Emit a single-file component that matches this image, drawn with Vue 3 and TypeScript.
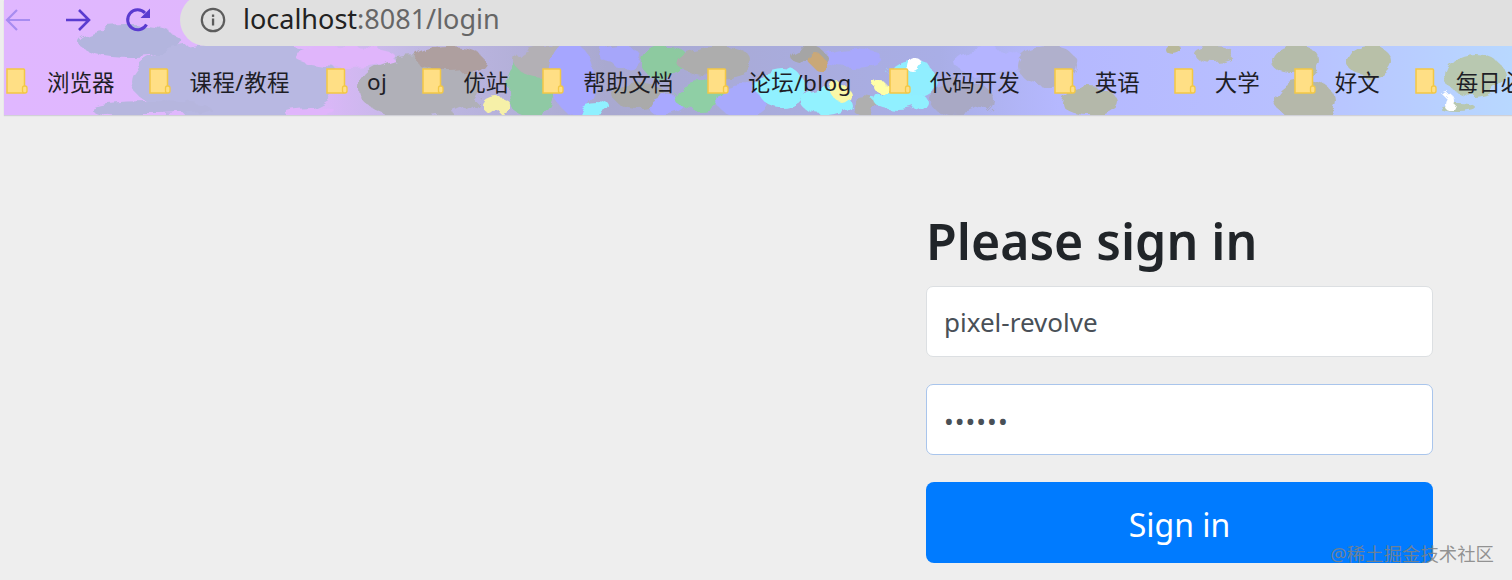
<script setup lang="ts">
interface Blob { x: number; y: number; rx: number; ry: number; c: string }
const blobs: Blob[] = [
  { x: 130, y: 42, rx: 52, ry: 14, c: '#b3b5de' },
  { x: 235, y: 80, rx: 105, ry: 40, c: '#b8b8e2' },
  { x: 150, y: 108, rx: 60, ry: 7, c: '#b6b6de' },
  { x: 345, y: 56, rx: 50, ry: 10, c: '#e0b5fb' },
  { x: 310, y: 112, rx: 26, ry: 5, c: '#e0b5fb' },
  { x: 420, y: 88, rx: 62, ry: 32, c: '#b0b0b8' },
  { x: 450, y: 60, rx: 34, ry: 12, c: '#ae9f9f' },
  { x: 495, y: 104, rx: 14, ry: 9, c: '#f6f0a8' },
  { x: 530, y: 88, rx: 24, ry: 30, c: '#8fc9a4' },
  { x: 545, y: 62, rx: 30, ry: 16, c: '#b3b0b5' },
  { x: 572, y: 78, rx: 22, ry: 34, c: '#a6a6ff' },
  { x: 620, y: 56, rx: 20, ry: 10, c: '#a6a6fa' },
  { x: 665, y: 62, rx: 24, ry: 18, c: '#8dcaa0' },
  { x: 715, y: 62, rx: 38, ry: 15, c: '#adadad' },
  { x: 640, y: 96, rx: 26, ry: 14, c: '#aaaaaa' },
  { x: 596, y: 110, rx: 17, ry: 8, c: '#8ff0ff' },
  { x: 668, y: 106, rx: 20, ry: 11, c: '#a8a8ff' },
  { x: 700, y: 96, rx: 26, ry: 16, c: '#8fcfa5' },
  { x: 742, y: 100, rx: 26, ry: 16, c: '#a8aafc' },
  { x: 782, y: 88, rx: 24, ry: 20, c: '#90f0ff' },
  { x: 825, y: 102, rx: 24, ry: 13, c: '#92f2ff' },
  { x: 840, y: 92, rx: 8, ry: 9, c: '#f8f8a8' },
  { x: 865, y: 106, rx: 14, ry: 9, c: '#afafaf' },
  { x: 852, y: 58, rx: 30, ry: 10, c: '#a8a8fc' },
  { x: 808, y: 56, rx: 18, ry: 8, c: '#a5a5a5' },
  { x: 818, y: 62, rx: 7, ry: 7, c: '#c9a878' },
  { x: 900, y: 100, rx: 26, ry: 12, c: '#90f0ff' },
  { x: 912, y: 78, rx: 24, ry: 18, c: '#90eeff' },
  { x: 915, y: 66, rx: 8, ry: 8, c: '#ffffff' },
  { x: 880, y: 86, rx: 7, ry: 6, c: '#ffffa8' },
  { x: 960, y: 98, rx: 32, ry: 18, c: '#a9a9c5' },
  { x: 990, y: 62, rx: 36, ry: 14, c: '#b4b4ff' },
  { x: 1048, y: 66, rx: 30, ry: 20, c: '#b0b0cc' },
  { x: 1090, y: 102, rx: 28, ry: 14, c: '#b4b8aa' },
  { x: 1176, y: 52, rx: 8, ry: 5, c: '#b8b89a' },
  { x: 1215, y: 55, rx: 20, ry: 8, c: '#b8bbb0' },
  { x: 1295, y: 60, rx: 24, ry: 16, c: '#b5bcaa' },
  { x: 1305, y: 100, rx: 30, ry: 20, c: '#b5b8aa' },
  { x: 1370, y: 62, rx: 22, ry: 16, c: '#b8c0a8' },
  { x: 1475, y: 76, rx: 30, ry: 22, c: '#b8c8b0' },
  { x: 1458, y: 108, rx: 18, ry: 4, c: '#b8c8b0' },
  { x: 1450, y: 103, rx: 6, ry: 8, c: '#ffffff' }
]
const folders: { label: string; extra: number; latin: boolean }[] = [
  { label: '浏览器', extra: 0, latin: false },
  { label: '课程/教程', extra: 2, latin: true },
  { label: 'oj', extra: 1, latin: true },
  { label: '优站', extra: 0, latin: false },
  { label: '帮助文档', extra: 0, latin: false },
  { label: '论坛/blog', extra: 3, latin: true },
  { label: '代码开发', extra: 0, latin: false },
  { label: '英语', extra: 0, latin: false },
  { label: '大学', extra: 0, latin: false },
  { label: '好文', extra: 1, latin: false },
  { label: '每日必', extra: 0, latin: false }
]
</script>

<template>
  <div class="screen">
    <header class="chrome">
      <svg class="art" width="1508" height="115" viewBox="4 0 1508 115" preserveAspectRatio="none" aria-hidden="true">
        <defs>
          <linearGradient id="base" x1="0" y1="0" x2="1" y2="0">
            <stop offset="0" stop-color="#e0b7ff" />
            <stop offset="0.2" stop-color="#e0b7fc" />
            <stop offset="0.27" stop-color="#c0b8e4" />
            <stop offset="0.4" stop-color="#a9a9d0" />
            <stop offset="0.62" stop-color="#a9aee6" />
            <stop offset="0.7" stop-color="#b5b8ff" />
            <stop offset="0.85" stop-color="#b8c0ff" />
            <stop offset="1" stop-color="#b8d8ff" />
          </linearGradient>
          <filter id="rough" x="-5%" y="-20%" width="110%" height="140%">
            <feTurbulence type="fractalNoise" baseFrequency="0.05" numOctaves="3" seed="7" />
            <feDisplacementMap in="SourceGraphic" scale="16" />
            <feGaussianBlur stdDeviation="0.7" />
          </filter>
        </defs>
        <rect x="4" y="0" width="1508" height="115" fill="url(#base)" />
        <g filter="url(#rough)">
          <ellipse v-for="(b, i) in blobs" :key="i" :cx="b.x" :cy="b.y" :rx="b.rx" :ry="b.ry" :fill="b.c" />
        </g>
      </svg>

      <div class="toolbar">
        <div class="nav">
          <svg class="nav-icon back" width="28" height="28" viewBox="0 0 28 28" aria-hidden="true">
            <path d="M26 14H3M13 4 3 14l10 10" fill="none" stroke="#a78cf0" stroke-width="2.2" />
          </svg>
          <svg class="nav-icon forward" width="28" height="28" viewBox="0 0 28 28" aria-hidden="true">
            <path d="M2 14h23M15 4l10 10-10 10" fill="none" stroke="#5a3bd0" stroke-width="2.6" />
          </svg>
          <svg class="nav-icon reload" width="28" height="28" viewBox="0 0 28 28" aria-hidden="true">
            <path d="M22.500 18.500A10 10 0 1 1 21 7" fill="none" stroke="#5a3bd0" stroke-width="3" />
            <path d="M26 2.500V12h-9.500z" fill="#5a3bd0" />
          </svg>
        </div>
        <div class="omnibox">
          <svg width="26" height="26" viewBox="0 0 26 26" aria-hidden="true">
            <circle cx="13" cy="13" r="11.200" fill="none" stroke="#5c5c5c" stroke-width="2.200" />
            <rect x="11.900" y="11.500" width="2.300" height="7" fill="#5c5c5c" />
            <rect x="11.900" y="7.500" width="2.300" height="2.400" fill="#5c5c5c" />
          </svg>
          <span class="url"><span class="host">localhost</span>:8081/login</span>
        </div>
      </div>

      <nav class="bookmarks">
        <div
          v-for="f in folders"
          :key="f.label"
          class="bookmark"
          :style="{ marginRight: f.extra + 'px' }"
        >
          <svg width="22" height="26" viewBox="0 0 22 26" aria-hidden="true">
            <path d="M1 1h16.500c.6 0 1 .4 1 1v19.500c0 1-.5 3.500-1.500 3.500H1z" fill="#ffdf85" stroke="#f3c845" stroke-width="1.500" />
            <rect x="16.500" y="18" width="4.500" height="7" rx="2" fill="#ffdf85" stroke="#f3c845" stroke-width="1.300" />
          </svg>
          <span class="bm-label" :class="{ latin: f.latin }">{{ f.label }}</span>
        </div>
      </nav>
    </header>

    <main class="page">
      <form class="signin" @submit.prevent>
        <h2 class="title">Please sign in</h2>
        <div class="field">pixel-revolve</div>
        <div class="field focus"><span class="dots">••••••</span></div>
        <button class="submit" type="button">Sign in</button>
      </form>
    </main>

    <div class="watermark">@稀土掘金技术社区</div>
  </div>
</template>

<style>
html, body { margin: 0; padding: 0; background: #eeeeee; overflow: hidden; }
</style>

<style scoped>
.screen {
  position: relative;
  width: 1512px;
  height: 580px;
  overflow: hidden;
  background: #eeeeee;
  font-family: "Noto Sans", "Noto Sans CJK SC", sans-serif;
  box-sizing: border-box;
}
.chrome {
  position: relative;
  height: 115px;
  margin-left: 4px;
  display: flex;
  flex-direction: column;
  overflow: hidden;
  box-shadow: 0 1px 1px rgba(190, 190, 200, 0.6);
}
.art { position: absolute; inset: 0; }
.toolbar {
  position: relative;
  height: 46px;
  display: flex;
  flex-shrink: 0;
}
.nav {
  width: 176px;
  height: 40px;
  display: flex;
  align-items: center;
  flex-shrink: 0;
}
.nav-icon { flex-shrink: 0; }
.forward { margin-left: 32px; }
.reload { margin-left: 32px; }
.omnibox {
  flex: 1;
  height: 52px;
  margin-top: -6px;
  background: #e0e0e0;
  border-radius: 26px 0 0 26px;
  display: flex;
  align-items: center;
  gap: 17px;
  padding-left: 20px;
  font-size: 27px;
  color: #666666;
}
.url { margin-top: -3px; }
.host { color: #222222; }
.bookmarks {
  position: relative;
  flex: 1;
  display: flex;
  align-items: center;
  padding-left: 2px;
  gap: 34px;
  white-space: nowrap;
}
.bookmark {
  display: flex;
  align-items: center;
  gap: 19px;
  font-size: 22.500px;
  color: #1e1e26;
  flex-shrink: 0;
}
.bm-label { position: relative; top: 1px; }
.bm-label.latin { letter-spacing: 0.42px; }
.page {
  display: flex;
  padding: 87px 0 0 926px;
}
.signin {
  width: 507px;
  display: flex;
  flex-direction: column;
}
.title {
  margin: 0 0 10px;
  height: 74px;
  line-height: 78px;
  font-size: 50px;
  font-weight: 600;
  color: #212529;
  white-space: nowrap;
}
.field {
  box-sizing: border-box;
  height: 71px;
  margin-bottom: 27px;
  display: flex;
  align-items: center;
  padding: 0 17px;
  background: #ffffff;
  border: 1px solid #dcdfe2;
  border-radius: 7px;
  font-size: 26px;
  color: #495057;
}
.field.focus { border-color: #a9c5ec; }
.dots { font-size: 26px; letter-spacing: 1px; color: #495057; padding-top: 3px; }
.submit {
  box-sizing: border-box;
  height: 81px;
  padding: 4px 0 0;
  border: none;
  border-radius: 8px;
  background: #007bff;
  color: #ffffff;
  font: inherit;
  font-size: 32px;
}
.watermark {
  position: absolute;
  right: 18px;
  bottom: 14px;
  font-size: 18.400px;
  line-height: 24px;
  color: rgba(130, 130, 130, 0.85);
  white-space: nowrap;
}
</style>
